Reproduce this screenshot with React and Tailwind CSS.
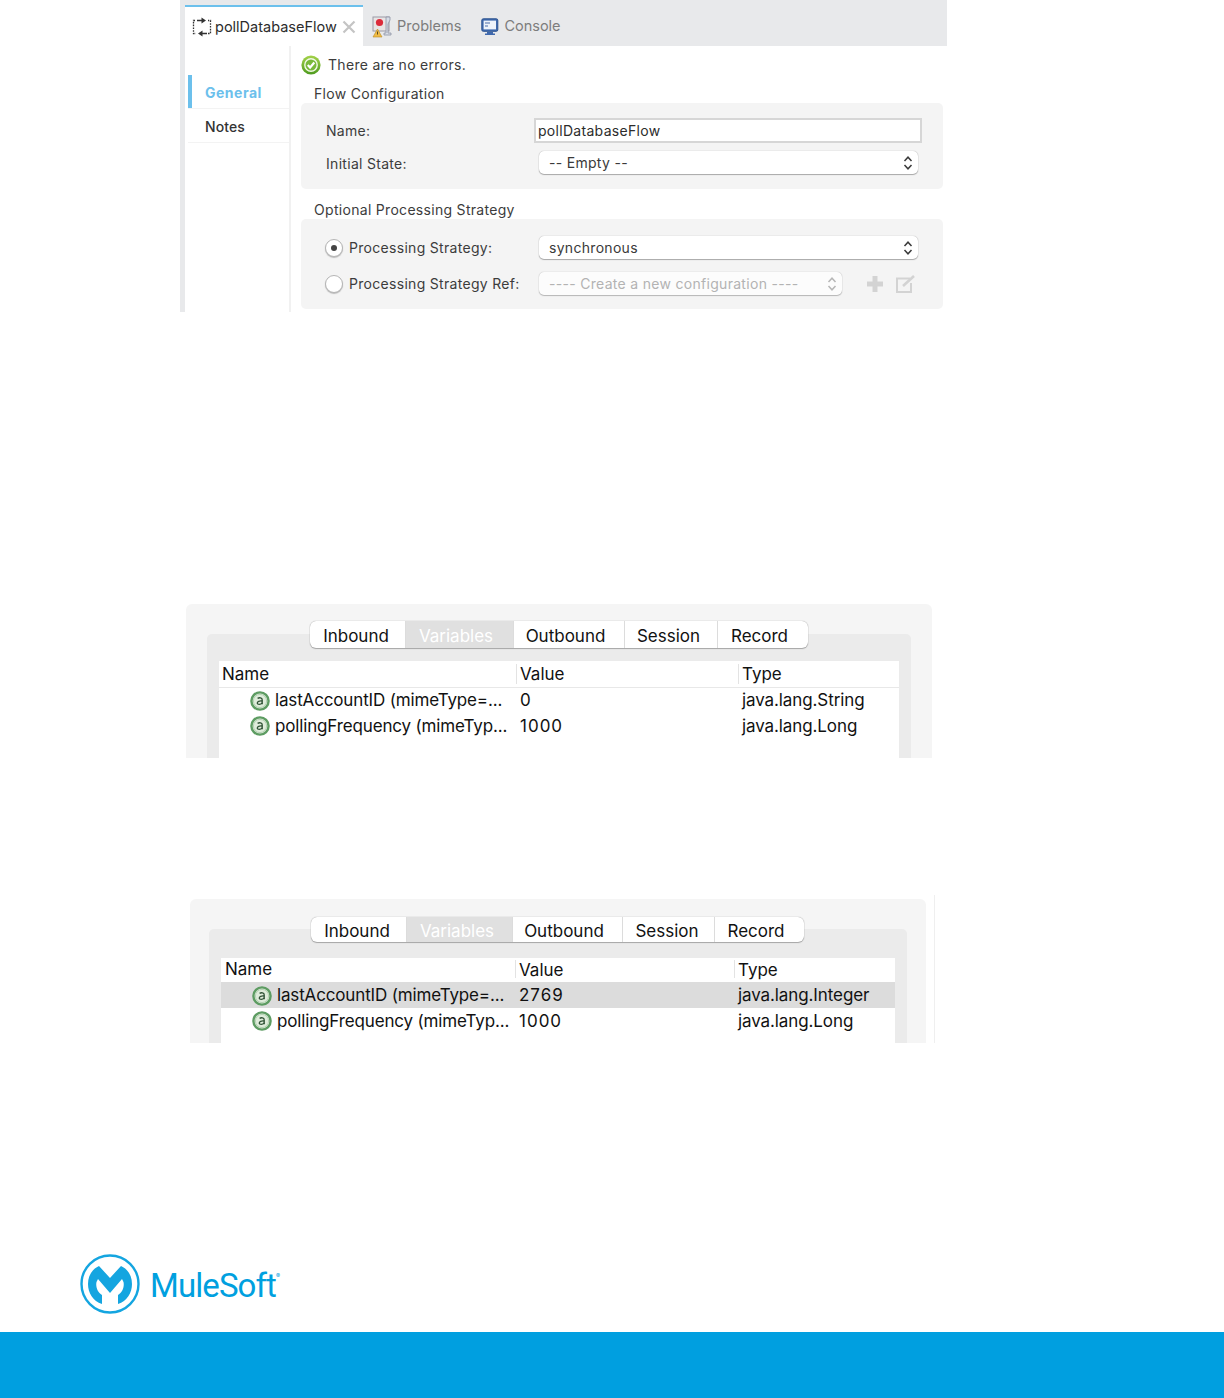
import React from 'react';

const FlowIcon = () => (
  <svg width="20" height="20" viewBox="0 0 20 20" fill="none" stroke="#333" strokeWidth="1.3">
    <path d="M3 3.5H1.5v13H4M16 16.5h2.5V3.5H16" strokeDasharray="1.6 1.2" />
    <path d="M9.5 0.5L14 3.5L9.5 6.5zM10.5 13.5L6 16.5L10.5 19.5z" fill="#333" stroke="none" />
    <path d="M5 3.5h5M10 16.5h5" />
  </svg>
);

const ProblemsIcon = () => (
  <svg width="20" height="22" viewBox="0 0 20 22">
    <rect x="1" y="1" width="16" height="14" fill="#e9e4e4" stroke="#9a9aa6" />
    <circle cx="7.5" cy="6.5" r="3.6" fill="#dc2a3a" />
    <path d="M14 1h4v3l-2 4v9h3v2h-7v-2h2V8z" fill="#d8dde6" stroke="#8d93a3" strokeWidth="0.8" />
    <path d="M5.5 13l4.5 8H1z" fill="#f0bb45" stroke="#b98a22" strokeWidth="0.6" />
    <path d="M5.5 15.5v3" stroke="#5a4a20" strokeWidth="1" />
  </svg>
);

const ConsoleIcon = () => (
  <svg width="18" height="18" viewBox="0 0 18 18">
    <rect x="0.8" y="0.8" width="16" height="12.5" rx="1.5" fill="#3f69ad" stroke="#2e5490" />
    <rect x="2.6" y="2.6" width="12.4" height="8.8" fill="#eef3fa" />
    <path d="M4 5h5M4 8h3" stroke="#4b6da8" strokeWidth="1" />
    <path d="M6 14h6v1.6h2V17H4v-1.4h2z" fill="#3f69ad" />
  </svg>
);

const CheckIcon = () => (
  <svg width="20" height="20" viewBox="0 0 20 20">
    <defs>
      <linearGradient id="okGreen" x1="0" y1="0" x2="0" y2="1">
        <stop offset="0" stopColor="#a5d34a" />
        <stop offset="1" stopColor="#4d9a1e" />
      </linearGradient>
    </defs>
    <circle cx="10" cy="10" r="9.6" fill="url(#okGreen)" />
    <circle cx="10" cy="10" r="6.2" fill="#79b93a" stroke="#f2f8e6" strokeWidth="1.4" />
    <path d="M6.8 10l2.3 2.5 4.2-5" fill="none" stroke="#ffffff" strokeWidth="2.2" />
  </svg>
);

const AtIcon = () => (
  <svg width="20" height="20" viewBox="0 0 20 20" className="shrink-0">
    <circle cx="10" cy="10" r="8.6" fill="#dfecdb" stroke="#5d9c62" strokeWidth="2.4" />
    <circle cx="10" cy="10" r="6.6" fill="none" stroke="#a9cba9" strokeWidth="0.8" />
    <path d="M7.6 7.4c1.5-1 4.6-1 4.6 1.3v4.6" fill="none" stroke="#2f5235" strokeWidth="1.3" />
    <path d="M12.2 10c-3-.3-4.9.4-4.9 1.9 0 2 3.4 1.9 4.9 0" fill="none" stroke="#2f5235" strokeWidth="1.3" />
  </svg>
);

const UpDown = ({ muted }) => (
  <svg width="10" height="16" viewBox="0 0 10 16" fill="none" stroke={muted ? '#a8a8a8' : '#3a3a3a'} strokeWidth="1.5">
    <path d="M1.5 6L5 2.2 8.5 6M1.5 10L5 13.8 8.5 10" />
  </svg>
);

const Select = ({ text, muted, className }) => (
  <div className={`flex items-center justify-between rounded-[5px] bg-white pl-[10px] pr-[5px] shadow-[0_0_1px_#999,0_1px_1px_#aaa] ${muted ? 'text-[#a3a3a3] opacity-80' : 'text-[#3a3a3a]'} ${className}`}>
    <span>{text}</span>
    <UpDown muted={muted} />
  </div>
);

const Radio = ({ on }) => (
  <div className="flex h-[18px] w-[18px] shrink-0 items-center justify-center rounded-full border border-[#b5b5b5] bg-white shadow-[0_1px_1px_#bbb]">
    {on && <div className="h-[6px] w-[6px] rounded-full bg-[#444]" />}
  </div>
);

const Tab = ({ label, className }) => (
  <div className={`flex items-center justify-center border-r border-[#dcdcdc] pt-[3px] last:border-r-0 ${className}`}>{label}</div>
);

const VarRow = ({ name, value, type, selected, rowClass, nameClass, valueClass }) => (
  <div className={`flex h-[25.5px] items-center text-[17px] leading-none tracking-[-0.1px] ${selected ? 'bg-[#dcdcdc]' : ''} ${rowClass}`}>
    <div className={`flex items-center gap-[5px] ${nameClass}`}>
      <AtIcon />
      <span className="whitespace-nowrap tracking-[-0.15px]">{name}</span>
    </div>
    <div className={`tracking-[1px] ${valueClass}`}>{value}</div>
    <div>{type}</div>
  </div>
);

function FlowEditor() {
  return (
    <div className="ml-[180px] flex h-[312px] w-[767px] bg-[#e8e9eb] pl-[5px] text-[14px] leading-none">
      <div className="flex w-full flex-col">
        <div className="flex h-[46px] shrink-0 items-end">
          <div className="flex h-[41px] w-[178px] items-center border-t-2 border-[#6cc0ec] bg-white pl-[7px] pt-[1px] text-[#2c2c2c]">
            <FlowIcon />
            <span className="ml-[3px] text-[14.5px]">pollDatabaseFlow</span>
            <svg width="14" height="14" viewBox="0 0 14 14" className="ml-[5px]" stroke="#c4c4c4" strokeWidth="2.2">
              <path d="M1.5 1.5l11 11M12.5 1.5l-11 11" />
            </svg>
          </div>
          <div className="flex h-[41px] items-center pl-[9px] pt-[2px] text-[14.5px] text-[#7d7d7d]">
            <ProblemsIcon />
            <span className="ml-[5px]">Problems</span>
            <span className="ml-[20px]"><ConsoleIcon /></span>
            <span className="ml-[5px]">Console</span>
          </div>
        </div>
        <div className="flex flex-1 bg-white">
          <div className="w-[106px] shrink-0 border-r-2 border-[#f1f1f1] pl-[3px] pt-[29px] font-medium">
            <div className="flex h-[33px] items-center border-l-4 border-[#6cc0ec] pl-[13px] pt-[2px] font-bold tracking-[0.5px] text-[#6cc0ec]">General</div>
            <div className="flex h-[35px] items-center border-y border-[#f3f3f3] pl-[17px] pt-[2px] tracking-[0.1px] text-[#333]">Notes</div>
          </div>
          <div className="flex-1 pl-[10px] pr-[4px] tracking-[0.3px] text-[#3c3c3c]">
            <div className="flex h-[36px] items-center pt-[1px]">
              <CheckIcon />
              <span className="ml-[7px]">There are no errors.</span>
            </div>
            <div className="flex h-[21px] items-center pl-[13px] pt-[3px]">Flow Configuration</div>
            <div className="h-[86px] rounded-[5px] bg-[#f4f4f4] pl-[25px] pt-[15px]">
              <div className="flex h-[25px] items-center">
                <span className="w-[208px]">Name:</span>
                <div className="flex h-[25px] w-[388px] items-center border-2 border-[#d6d6d6] bg-white pl-[2px] text-[#2c2c2c]">pollDatabaseFlow</div>
              </div>
              <div className="mt-[8px] flex h-[23px] items-center">
                <span className="w-[213px] pt-[2px]">Initial State:</span>
                <Select text="-- Empty --" className="h-[23px] w-[379px]" />
              </div>
            </div>
            <div className="flex h-[30px] items-end pb-[2px] pl-[13px]">Optional Processing Strategy</div>
            <div className="h-[90px] rounded-[5px] bg-[#f4f4f4] pl-[24px] pt-[17px]">
              <div className="flex h-[23px] items-center">
                <Radio on />
                <span className="ml-[6px] w-[190px]">Processing Strategy:</span>
                <Select text="synchronous" className="h-[23px] w-[379px]" />
              </div>
              <div className="mt-[13px] flex h-[23px] items-center">
                <Radio />
                <span className="ml-[6px] w-[190px]">Processing Strategy Ref:</span>
                <Select muted text="---- Create a new configuration ----" className="h-[23px] w-[303px]" />
                <svg width="18" height="18" viewBox="0 0 18 18" className="ml-[24px]" fill="#d3d3d3">
                  <path d="M6.5 1h5v5.5H17v5h-5.5V17h-5v-5.5H1v-5h5.5z" />
                </svg>
                <svg width="21" height="20" viewBox="0 0 21 20" className="ml-[11px]" fill="none" stroke="#d3d3d3" strokeWidth="2">
                  <path d="M15 4.5H2v13.5h14V9" />
                  <path d="M8 12L19 2" strokeWidth="2.6" />
                </svg>
              </div>
            </div>
          </div>
        </div>
      </div>
    </div>
  );
}

function DebugOne() {
  return (
    <div className="ml-[186px] mt-[292px] h-[154px] w-[746px] overflow-hidden rounded-t-[6px] bg-[#f5f5f5] px-[21px] pt-[17px] text-[17px] leading-none text-[#111]">
      <div className="relative z-10 ml-[103px] flex h-[27px] w-[498px] overflow-hidden rounded-[6px] bg-white shadow-[0_0_1px_#888,0_1px_1px_#aaa]">
        <Tab label="Inbound" className="w-[96px] pr-[3px]" />
        <Tab label="Variables" className="w-[108px] bg-[#e0e0e0] pr-[7px] text-white" />
        <Tab label="Outbound" className="w-[111px] pr-[7px]" />
        <Tab label="Session" className="w-[93px] pr-[5px]" />
        <Tab label="Record" className="w-[90px] pr-[7px]" />
      </div>
      <div className="-mt-[14px] h-[124px] rounded-t-[5px] bg-[#ebebeb] px-[12px] pt-[27px]">
        <div className="h-[97px] bg-white">
          <div className="flex h-[27px] items-center border-b border-[#e8e8e8]">
            <div className="w-[297px] pl-[3px]">Name</div>
            <div className="h-[20px] w-[222px] border-l border-[#e3e3e3] pl-[3px] pt-[2px]">Value</div>
            <div className="h-[20px] border-l border-[#e3e3e3] pl-[3px] pt-[2px]">Type</div>
          </div>
          <VarRow name="lastAccountID (mimeType=..." value="0" type="java.lang.String" nameClass="w-[301px] pl-[31px]" valueClass="w-[222px]" />
          <VarRow name="pollingFrequency (mimeTyp..." value="1000" type="java.lang.Long" nameClass="w-[301px] pl-[31px]" valueClass="w-[222px]" />
        </div>
      </div>
    </div>
  );
}

function DebugTwo() {
  return (
    <div className="relative ml-[190px] mt-[141px] h-[144px] w-[736px] rounded-t-[6px] bg-[#f5f5f5] px-[19px] pt-[18px] text-[17px] leading-none text-[#111]">
      <div className="absolute -top-[4px] left-[744px] h-[148px] w-px bg-[#efefef]" />
      <div className="relative z-10 ml-[102px] flex h-[25px] w-[493px] overflow-hidden rounded-[6px] bg-white shadow-[0_0_1px_#888,0_1px_1px_#aaa]">
        <Tab label="Inbound" className="w-[96px] pr-[3px]" />
        <Tab label="Variables" className="w-[106px] bg-[#e0e0e0] pr-[5px] text-white" />
        <Tab label="Outbound" className="w-[110px] pr-[7px]" />
        <Tab label="Session" className="w-[92px] pr-[3px]" />
        <Tab label="Record" className="w-[89px] pr-[7px]" />
      </div>
      <div className="-mt-[13px] h-[114px] rounded-t-[5px] bg-[#ebebeb] px-[12px] pt-[29px]">
        <div className="h-[85px] bg-white">
          <div className="flex h-[24px] items-center pb-[2px]">
            <div className="w-[294px] pl-[4px]">Name</div>
            <div className="h-[18px] w-[219px] border-l border-[#e3e3e3] pl-[3px] pt-[2px]">Value</div>
            <div className="h-[18px] border-l border-[#e3e3e3] pl-[3px] pt-[2px]">Type</div>
          </div>
          <VarRow selected name="lastAccountID (mimeType=..." value="2769" type="java.lang.Integer" rowClass="pt-[2px]" nameClass="w-[298px] pl-[31px]" valueClass="w-[219px]" />
          <VarRow name="pollingFrequency (mimeTyp..." value="1000" type="java.lang.Long" rowClass="pt-[2px]" nameClass="w-[298px] pl-[31px]" valueClass="w-[219px]" />
        </div>
      </div>
    </div>
  );
}

const MuleLogo = () => (
  <div className="ml-[80px] mt-[211px] flex h-[60px] items-center text-[#00a0df]">
    <svg width="60" height="60" viewBox="0 0 60 60" fill="#14a5e0">
      <circle cx="30" cy="30" r="28.5" fill="none" stroke="#14a5e0" strokeWidth="2.4" />
      <path d="M22 50C13 47 8 39 8 30C8 22 12 15 19 12L30 24L41 12C48 15 52 22 52 30C52 39 47 47 38 50V41C42.5 38.5 44.5 33 43.5 28L42 25L30 39L18 25L16.5 28C15.5 33 17.5 38.5 22 41Z" />
    </svg>
    <span className="ml-[10px] pt-[2px] [font-family:Roboto,sans-serif] text-[33px] font-normal leading-none tracking-[-0.9px]">MuleSoft</span>
    <span className="mb-[16px] text-[6px] leading-none">®</span>
  </div>
);

export default function App() {
  return (
    <div className="flex h-[1398px] w-full flex-col overflow-hidden bg-white [font-family:Inter,sans-serif]">
      <FlowEditor />
      <DebugOne />
      <DebugTwo />
      <MuleLogo />
      <div className="mt-[18px] h-[66px] w-full bg-[#009fe0]" />
    </div>
  );
}
